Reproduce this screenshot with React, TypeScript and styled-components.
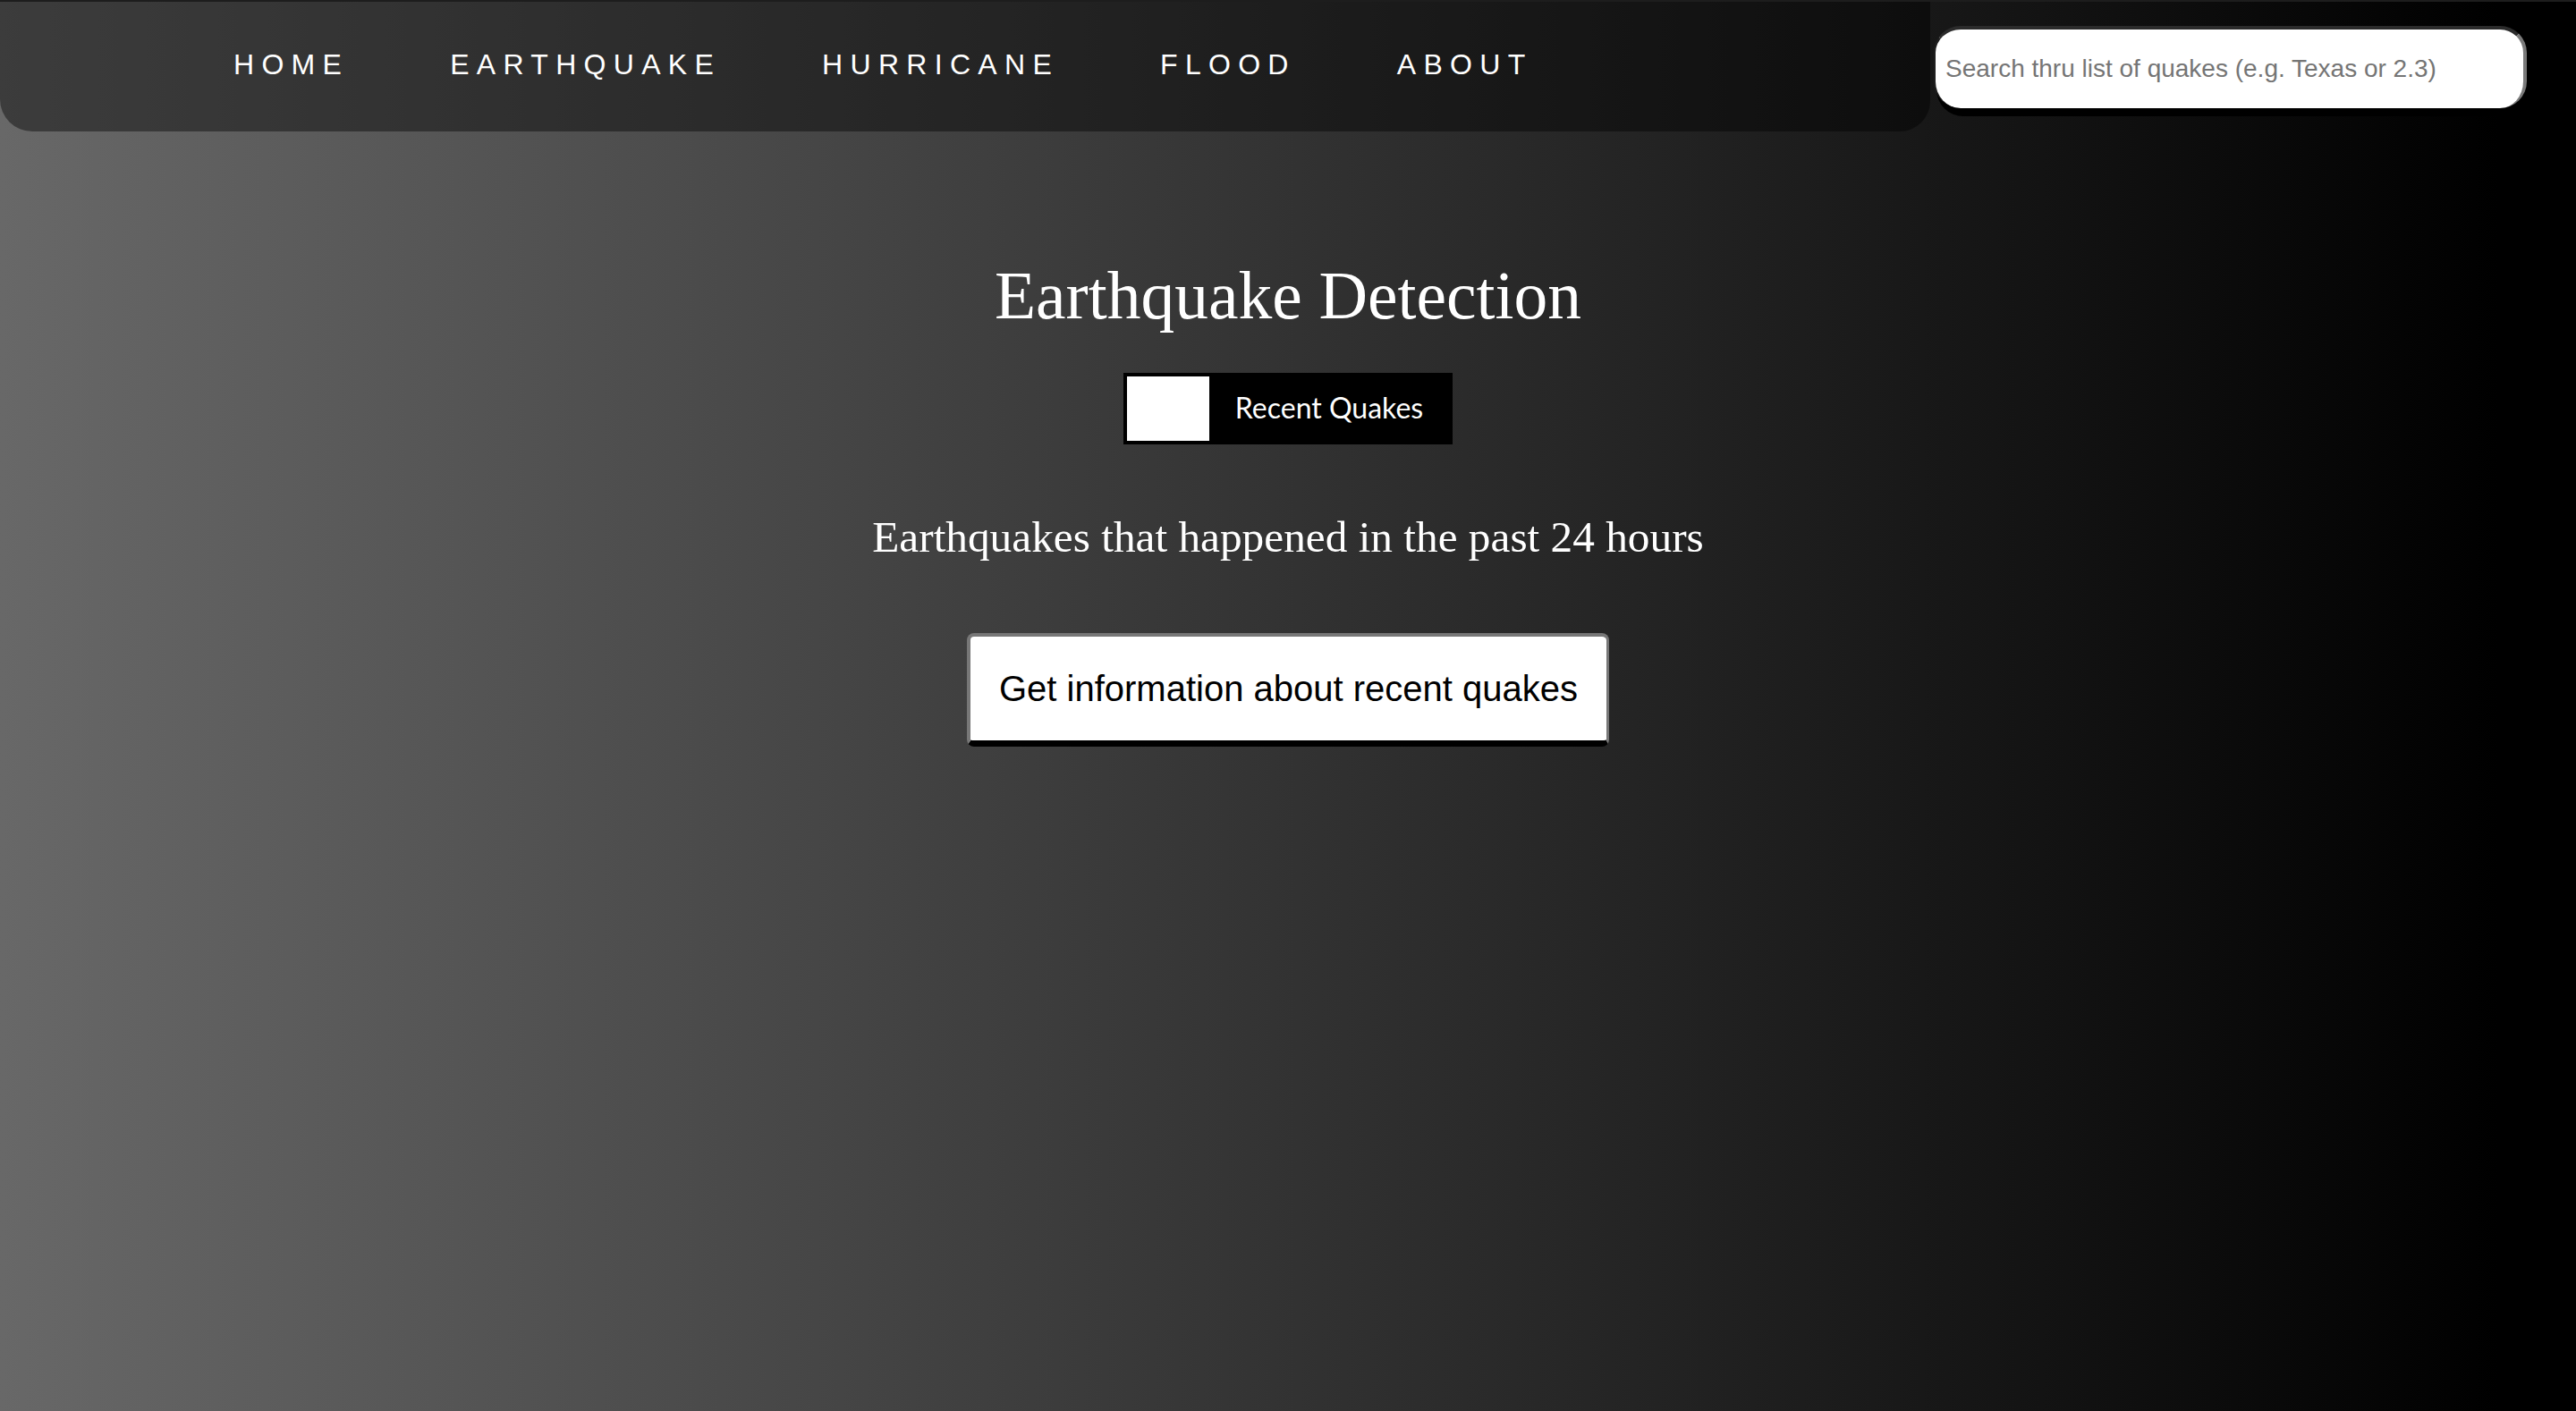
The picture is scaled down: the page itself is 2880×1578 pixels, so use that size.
import React from "react";
import styled, { createGlobalStyle } from "styled-components";

const GlobalStyle = createGlobalStyle`
  html, body {
    margin: 0;
    padding: 0;
  }
  body {
    font-family: "Liberation Sans", Arial, sans-serif;
  }
  * { box-sizing: border-box; }
`;

const Page = styled.div`
  min-height: 100vh;
  background: linear-gradient(to right, #686868 0%, #000000 97%);
  border-top: 2px solid #1d1d1d;
  display: flex;
  flex-direction: column;
`;

const Header = styled.header`
  display: flex;
  align-items: center;
  gap: 4px;
  padding-right: 55px;
`;

const Nav = styled.nav`
  flex: 1;
  height: 145px;
  background: rgba(0, 0, 0, 0.42);
  border-radius: 0 0 34px 36px;
  display: flex;
  align-items: center;
  padding-bottom: 4px;
`;

const NavList = styled.ul`
  list-style: none;
  margin: 0;
  padding: 0 0 0 261px;
  display: flex;
  gap: 113px;
`;

const NavItem = styled.li`
  font-family: "Liberation Sans", Arial, sans-serif;
  font-size: 32px;
  letter-spacing: 8.3px;
  color: #ffffff;
  text-transform: uppercase;
  cursor: pointer;
`;

const SearchInput = styled.input`
  width: 663px;
  height: 92px;
  border-radius: 30px;
  border-style: solid;
  border-width: 4px 4px 0 2px;
  border-color: #2b2b2b #7a7a7a transparent #1f1f1f;
  background: #ffffff;
  box-shadow: 3px 9px 0 #000000;
  padding: 0 11px;
  font-family: "Liberation Sans", Arial, sans-serif;
  font-size: 28px;
  color: #222;
  outline: none;
  &::placeholder {
    color: #757575;
  }
`;

const Main = styled.main`
  display: flex;
  flex-direction: column;
  align-items: center;
`;

const Title = styled.h1`
  margin: 146px 0 0;
  font-family: "Liberation Serif", "Times New Roman", serif;
  font-weight: 400;
  font-size: 75.5px;
  line-height: 1;
  color: #ffffff;
`;

const Toggle = styled.label`
  margin-top: 48px;
  display: inline-flex;
  align-items: center;
  height: 80px;
  border: 4px solid #000000;
  background: #000000;
  cursor: pointer;
`;

const Knob = styled.span`
  width: 92px;
  height: 72px;
  background: #ffffff;
`;

const ToggleText = styled.span`
  padding: 0 29px 3px;
  font-family: Lato, "Noto Sans", sans-serif;
  font-size: 32px;
  color: #ffffff;
`;

const Subtitle = styled.h3`
  margin: 79px 0 0;
  font-family: "Liberation Serif", "Times New Roman", serif;
  font-weight: 400;
  font-size: 49.3px;
  line-height: 1;
  color: #ffffff;
`;

const ActionButton = styled.button`
  margin-top: 83px;
  padding: 35px 32px;
  background: #ffffff;
  border-style: solid;
  border-width: 4px 3px 7px 4px;
  border-color: #777777 #777777 #000000 #777777;
  border-radius: 8px;
  font-family: "Liberation Sans", Arial, sans-serif;
  font-size: 40px;
  line-height: 46px;
  color: #000000;
  cursor: pointer;
`;

const navLinks = ["Home", "Earthquake", "Hurricane", "Flood", "About"];

export default function App() {
  return (
    <>
      <GlobalStyle />
      <Page>
        <Header>
          <Nav>
            <NavList>
              {navLinks.map((l) => (
                <NavItem key={l}>{l}</NavItem>
              ))}
            </NavList>
          </Nav>
          <SearchInput placeholder="Search thru list of quakes (e.g. Texas or 2.3)" />
        </Header>
        <Main>
          <Title>Earthquake Detection</Title>
          <Toggle>
            <Knob />
            <ToggleText>Recent Quakes</ToggleText>
          </Toggle>
          <Subtitle>Earthquakes that happened in the past 24 hours</Subtitle>
          <ActionButton>Get information about recent quakes</ActionButton>
        </Main>
      </Page>
    </>
  );
}
